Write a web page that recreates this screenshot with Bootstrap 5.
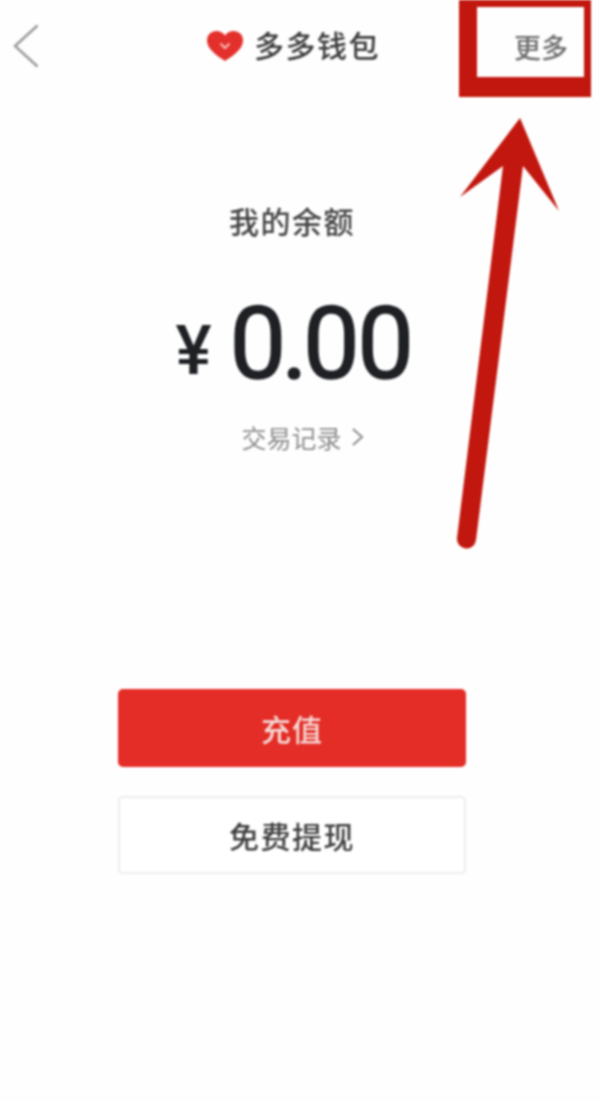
<!doctype html>
<html lang="zh">
<head>
<meta charset="utf-8">
<title>多多钱包</title>
<link href="https://cdn.jsdelivr.net/npm/bootstrap@5.3.0/dist/css/bootstrap.min.css" rel="stylesheet">
<style>
html,body{margin:0;background:#fefefe;}
body{font-family:"Noto Sans CJK SC","Liberation Sans",sans-serif;overflow:hidden;}
.wallet-page{position:relative;width:600px;height:1101px;filter:blur(1.3px);}
.wallet-col{width:584px;}
.top-bar{height:92px;padding:0 16px 0 13px;}
.back-link{width:26px;height:44px;display:block;}
.brand-name{font-size:30px;line-height:1;letter-spacing:1.5px;color:#3c3c3c;font-weight:500;margin-top:-4px;}
.more-link{font-size:27px;line-height:1;color:#6e6e6e;font-weight:500;margin-left:auto;}
.brand-slot{gap:11px;margin-left:168px;}
.balance-label{margin-top:110px;font-size:30px;line-height:36px;letter-spacing:1.5px;color:#444;font-weight:500;}
.balance-row{margin-top:56px;height:100px;color:#1e2024;font-family:Roboto,"Liberation Sans",sans-serif;}
.yen-sign{font-size:68px;line-height:1;font-weight:500;margin-left:3px;margin-right:18px;margin-top:14px;}
.amount-num{font-size:101px;line-height:100px;font-weight:400;letter-spacing:-2.500px;-webkit-text-stroke:1.5px #1e2024;}
.amount-int{letter-spacing:-5px;}
.records-link{margin-top:28px;margin-left:21px;font-size:25px;line-height:30px;color:#8c8c8c;gap:9px;}
.action-stack{width:348px;margin-top:237px;gap:29px;}
.btn-charge,.btn-cash{height:78px;border-radius:5px;font-size:30px;font-weight:500;display:flex;align-items:center;justify-content:center;}
.btn-charge{background:#e32d26;border:0;color:#f6d9d6;letter-spacing:1px;}
.btn-charge:hover{background:#e32d26;color:#f6d9d6;}
.btn-cash{background:#fff;border:2px solid #ececec;color:#3e3e3e;letter-spacing:1.5px;}
.mark-layer{position:absolute;left:0;top:0;}
</style>
</head>
<body>
<div class="wallet-page">
  <div class="wallet-col d-flex flex-column align-items-center">
    <header class="top-bar w-100 d-flex align-items-center">
      <a class="back-link" href="#" aria-label="返回">
        <svg width="26" height="44" viewBox="0 0 26 44"><path d="M24.500 1.500 L2 22 L24.500 42.500" fill="none" stroke="#9a9a9a" stroke-width="2.500"/></svg>
      </a>
      <div class="brand-slot d-flex align-items-center">
        <svg width="36" height="30" viewBox="0 0 36 30"><path d="M18 30 C12 26 0 19 0 9.500 C0 3.500 4.500 0 9.500 0 C13 0 16 1.500 18 4.500 C20 1.500 23 0 26.500 0 C31.500 0 36 3.500 36 9.500 C36 19 24 26 18 30 Z" fill="#e3302c"/><path d="M13.500 12.500 L18 17 L22.500 12.500" fill="none" stroke="#f7b9b6" stroke-width="2"/></svg>
        <span class="brand-name">多多钱包</span>
      </div>
      <a class="more-link text-decoration-none" href="#">更多</a>
    </header>
    <div class="balance-label">我的余额</div>
    <div class="balance-row d-flex align-items-center">
      <span class="yen-sign">¥</span>
      <span class="amount-num"><span class="amount-int">0.</span>00</span>
    </div>
    <a class="records-link text-decoration-none d-flex align-items-center" href="#">
      <span>交易记录</span>
      <svg width="13" height="20" viewBox="0 0 13 20"><path d="M2 2 L11 10 L2 18" fill="none" stroke="#8c8c8c" stroke-width="2"/></svg>
    </a>
    <div class="action-stack d-flex flex-column">
      <button type="button" class="btn btn-charge">充值</button>
      <button type="button" class="btn btn-cash">免费提现</button>
    </div>
  </div>
  <svg class="mark-layer" width="600" height="600" viewBox="0 0 600 600" aria-hidden="true">
    <path fill-rule="evenodd" d="M459 0 H591 V97 H459 Z M477 7 V77 H584 V7 Z" fill="#c2170e"/>
    <path d="M520 118 L559 211 L523 166 L476 540 A9.500 9.500 0 0 1 457 538 L503 166 L460 197 Z" fill="#c2170e"/>
  </svg>
</div>
<script src="https://cdn.jsdelivr.net/npm/bootstrap@5.3.0/dist/js/bootstrap.bundle.min.js"></script>
</body>
</html>
